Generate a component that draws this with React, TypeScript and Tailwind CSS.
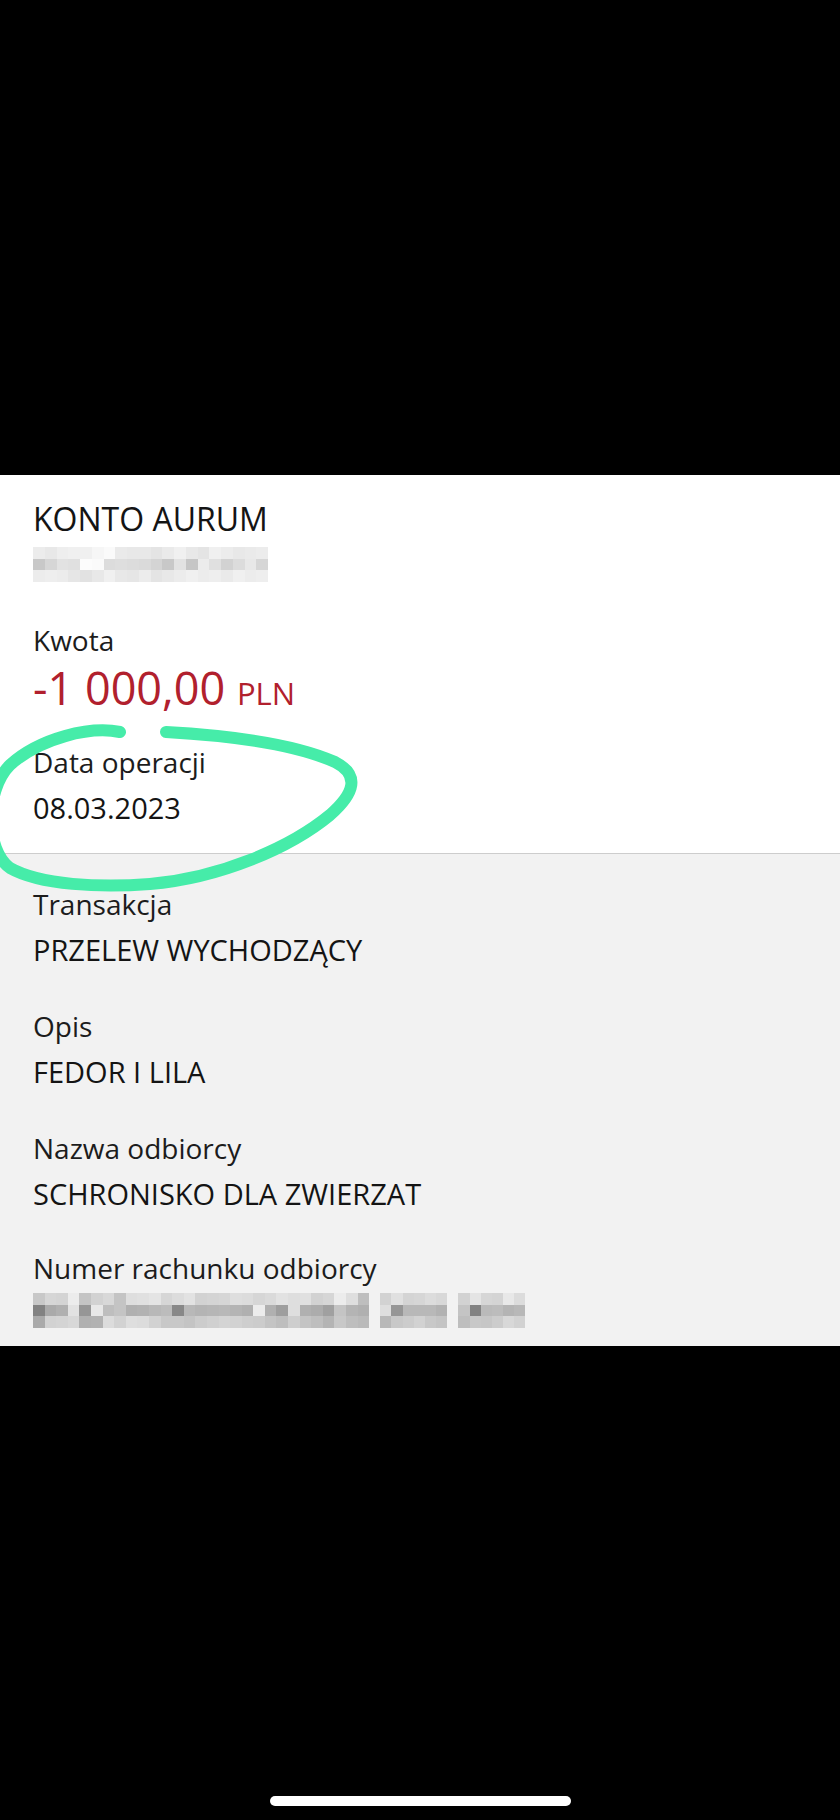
const accountRows: number[][] = [
  [236, 232, 238, 240, 240, 246, 250, 234, 232, 232, 228, 234, 240, 232, 228, 240, 236, 232, 234, 236],
  [200, 214, 226, 224, 252, 250, 220, 222, 220, 218, 212, 200, 226, 198, 236, 224, 210, 220, 232, 214],
  [236, 238, 236, 230, 226, 232, 240, 232, 230, 236, 228, 232, 236, 240, 236, 238, 234, 240, 236, 238],
];

const recipientSegments: number[][][] = [
  [
    [200, 214, 212, 236, 196, 210, 216, 196, 222, 224, 228, 214, 220, 226, 210, 212, 214, 222, 220, 214, 218, 226, 222, 224, 210, 214, 236, 222, 190],
    [130, 170, 176, 226, 150, 232, 190, 196, 176, 178, 184, 188, 136, 184, 180, 182, 184, 180, 176, 236, 176, 158, 222, 176, 172, 160, 196, 180, 176],
    [170, 210, 212, 216, 176, 178, 220, 210, 222, 220, 210, 200, 200, 196, 204, 208, 212, 210, 206, 204, 196, 190, 206, 196, 190, 180, 200, 190, 186],
  ],
  [
    [210, 224, 212, 214, 220, 216],
    [222, 150, 184, 184, 184, 178],
    [184, 200, 204, 210, 200, 196],
  ],
  [
    [210, 228, 214, 212, 232, 220],
    [196, 130, 186, 188, 180, 184],
    [190, 200, 198, 204, 216, 210],
  ],
];

function Pixels({ rows, cell }: { rows: number[][]; cell: number }) {
  return (
    <div className="flex flex-col">
      {rows.map((row, r) => (
        <div key={r} className="flex">
          {row.map((v, c) => (
            <div
              key={c}
              className="h-[11.67px]"
              style={{ width: cell, backgroundColor: `rgb(${v},${v},${v})` }}
            />
          ))}
        </div>
      ))}
    </div>
  );
}

function Field({
  label,
  value,
  className = "",
}: {
  label: string;
  value: string;
  className?: string;
}) {
  return (
    <div className={className}>
      <div className="text-[28px] leading-[46px] text-[#1c1c1c]">{label}</div>
      <div className="text-[29px] leading-[46px] text-[#141414]">{value}</div>
    </div>
  );
}

export default function App() {
  return (
    <div
      className="relative flex h-[1820px] w-[840px] flex-col overflow-hidden bg-black"
      style={{ fontFamily: '"Open Sans", "Noto Sans", sans-serif' }}
    >
      <div className="h-[475px] shrink-0" />

      <section className="flex flex-col border-b border-[#cdcdcd] bg-white px-[33px] pt-[21px] pb-[22px]">
        <div className="text-[32px] leading-[46px] text-[#141414]">KONTO AURUM</div>
        <div className="mt-[5px] h-[35px]">
          <Pixels rows={accountRows} cell={11.75} />
        </div>
        <div className="mt-[35px] text-[28px] leading-[46px] text-[#1c1c1c]">Kwota</div>
        <div className="text-[45px] leading-[50px] text-[#b1202d]">
          -1 000,00 <span className="text-[31px]">PLN</span>
        </div>
        <div className="mt-[21px] text-[28px] leading-[46px] text-[#1c1c1c]">Data operacji</div>
        <div className="text-[29px] leading-[46px] text-[#141414]">08.03.2023</div>
      </section>

      <section className="flex flex-col bg-[#f2f2f2] px-[33px] pt-[27px] pb-[18px]">
        <Field label="Transakcja" value="PRZELEW WYCHODZĄCY" />
        <Field label="Opis" value="FEDOR I LILA" className="mt-[30px]" />
        <Field label="Nazwa odbiorcy" value="SCHRONISKO DLA ZWIERZAT" className="mt-[30px]" />
        <div className="mt-[28px] text-[28px] leading-[46px] text-[#1c1c1c]">
          Numer rachunku odbiorcy
        </div>
        <div className="mt-[2px] flex h-[35px] gap-[11px]">
          {recipientSegments.map((seg, i) => (
            <Pixels key={i} rows={seg} cell={i === 0 ? 11.6 : 11.2} />
          ))}
        </div>
      </section>

      <div className="flex flex-1 flex-col items-center justify-end pb-[14px]">
        <div className="h-[10px] w-[301px] rounded-full bg-white" />
      </div>

      <svg
        className="pointer-events-none absolute top-0 left-0 h-[1820px] w-[840px]"
        viewBox="0 0 840 1820"
      >
        <path
          d="M120 732 C 90 726, 40 738, 10 765 C -15 790, -15 850, 10 868 C 40 885, 100 888, 150 884 C 220 878, 290 848, 330 815 C 355 793, 360 775, 335 762 C 290 742, 220 735, 166 732"
          fill="none"
          stroke="#46eca9"
          strokeWidth="12"
          strokeLinecap="round"
        />
      </svg>
    </div>
  );
}
